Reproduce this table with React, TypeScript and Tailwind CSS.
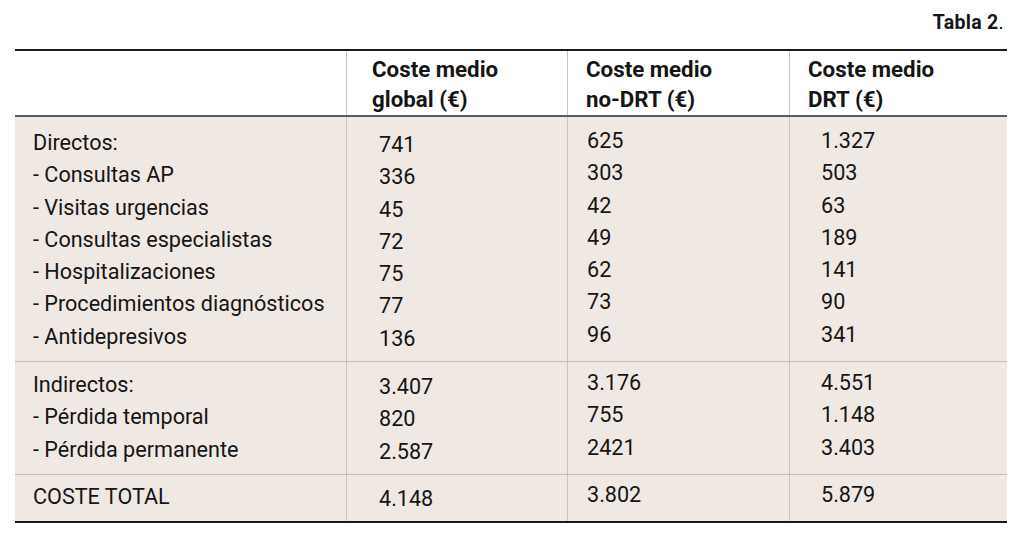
import React from "react";

const sec1 = {
  labels: [
    "Directos:",
    "- Consultas AP",
    "- Visitas urgencias",
    "- Consultas especialistas",
    "- Hospitalizaciones",
    "- Procedimientos diagnósticos",
    "- Antidepresivos",
  ],
  c1: ["741", "336", "45", "72", "75", "77", "136"],
  c2: ["625", "303", "42", "49", "62", "73", "96"],
  c3: ["1.327", "503", "63", "189", "141", "90", "341"],
};
const sec2 = {
  labels: ["Indirectos:", "- Pérdida temporal", "- Pérdida permanente"],
  c1: ["3.407", "820", "2.587"],
  c2: ["3.176", "755", "2421"],
  c3: ["4.551", "1.148", "3.403"],
};
const sec3 = {
  labels: ["COSTE TOTAL"],
  c1: ["4.148"],
  c2: ["3.802"],
  c3: ["5.879"],
};

function Lines({ items }: { items: string[] }) {
  return (
    <>
      {items.map((t, i) => (
        <div key={i} className="h-[32.3px] leading-[32.3px] whitespace-nowrap">
          {t}
        </div>
      ))}
    </>
  );
}

function Section({
  data,
  pt,
  pb,
  border,
}: {
  data: { labels: string[]; c1: string[]; c2: string[]; c3: string[] };
  pt: string;
  pb: string;
  border: string;
}) {
  return (
    <div className={`grid grid-cols-[332px_221px_222px_217px] ${border}`}>
      <div className={`pl-[18px] border-r border-[#cbc3be] text-[21.6px] ${pt} ${pb}`}>
        <Lines items={data.labels} />
      </div>
      <div className={`pl-[32px] border-r border-[#cbc3be] text-[21.6px] ${pt} ${pb}`}>
        <div className="translate-y-[2px]">
          <Lines items={data.c1} />
        </div>
      </div>
      <div className={`pl-[19px] border-r border-[#cbc3be] text-[21.6px] ${pt} ${pb}`}>
        <div className="-translate-y-[2px]">
          <Lines items={data.c2} />
        </div>
      </div>
      <div className={`pl-[31px] text-[21.6px] ${pt} ${pb}`}>
        <div className="-translate-y-[2px]">
          <Lines items={data.c3} />
        </div>
      </div>
    </div>
  );
}

export default function App() {
  return (
    <div
      className="w-[1024px] h-[542px] bg-white text-[#151515] overflow-hidden"
      style={{ fontFamily: "Roboto, 'Liberation Sans', sans-serif" }}
    >
      <div className="flex justify-end pr-[20px] pt-[11px] h-[49px]">
        <span className="text-[19.5px] font-bold leading-[24px] tracking-[0.3px]">
          Tabla 2<span className="font-normal">.</span>
        </span>
      </div>
      <div className="ml-[15px] w-[992px] border-t-2 border-[#1a1a1a]">
        <div className="grid grid-cols-[332px_221px_222px_217px] border-b-2 border-[#5c5c5c] h-[66px] bg-white">
          <div className="border-r border-[#cbc3be]" />
          <div className="border-r border-[#cbc3be] pl-[25px] pt-[3px] font-bold text-[22.3px] leading-[30px]">
            <div>Coste medio</div>
            <div>global (€)</div>
          </div>
          <div className="border-r border-[#cbc3be] pl-[18px] pt-[3px] font-bold text-[22.3px] leading-[30px]">
            <div>Coste medio</div>
            <div>no-DRT (€)</div>
          </div>
          <div className="pl-[18px] pt-[3px] font-bold text-[22.3px] leading-[30px]">
            <div>Coste medio</div>
            <div>DRT (€)</div>
          </div>
        </div>
        <div className="bg-[#f0e8e3] border-b-2 border-[#1a1a1a]">
          <Section data={sec1} pt="pt-[10px]" pb="pb-[8px]" border="border-b border-[#c4bcb7]" />
          <Section data={sec2} pt="pt-[7px]" pb="pb-[8px]" border="border-b border-[#c4bcb7]" />
          <Section data={sec3} pt="pt-[6px]" pb="pb-[8px]" border="" />
        </div>
      </div>
    </div>
  );
}
